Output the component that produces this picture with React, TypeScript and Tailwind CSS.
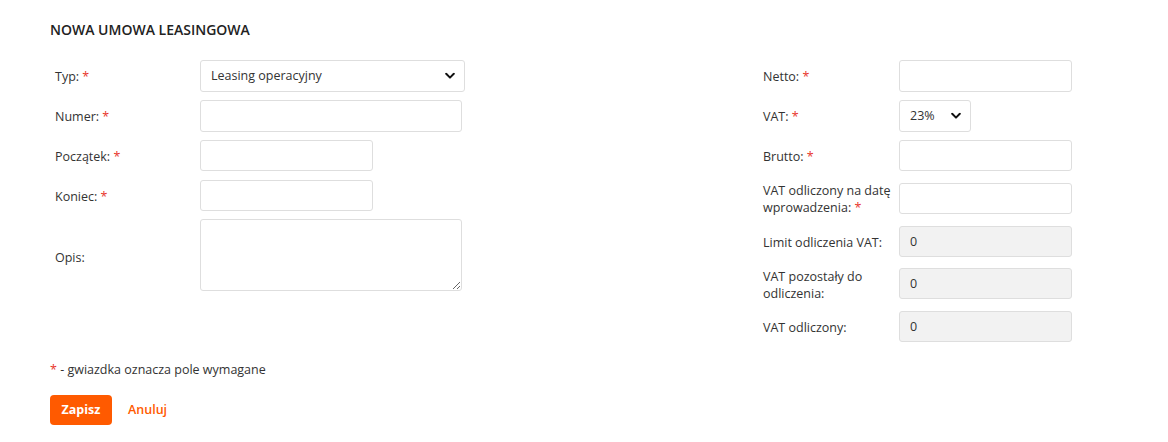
import type { ReactNode } from 'react'

const Req = () => <span className="text-[#e8352b]"> *</span>

function Chevron() {
  return (
    <svg
      className="pointer-events-none absolute right-[10px] top-1/2 -translate-y-1/2"
      width="10"
      height="7"
      viewBox="0 0 10 7"
      fill="none"
    >
      <path d="M1.2 1.3 5 5.1 8.8 1.3" stroke="#111" strokeWidth="2" strokeLinecap="round" strokeLinejoin="round" />
    </svg>
  )
}

const inputCls =
  'h-[31px] rounded-[3px] border border-[#dedede] bg-white px-[10px] text-[12.5px] text-[#333] outline-none'
const readonlyCls =
  'h-[31px] w-[173px] rounded-[3px] border border-[#dedede] bg-[#f2f2f2] px-[10px] text-[12.5px] text-[#333] outline-none'

function Row({
  label,
  children,
  className = 'h-[32px]',
  labelClass = '',
}: {
  label: ReactNode
  children: ReactNode
  className?: string
  labelClass?: string
}) {
  return (
    <div className={`flex ${className}`}>
      <div className={`flex w-[150px] shrink-0 items-center pl-[5px] leading-[17px] ${labelClass}`}>
        <span>{label}</span>
      </div>
      <div>{children}</div>
    </div>
  )
}

function RRow({ label, children, className = 'h-[32px]' }: { label: ReactNode; children: ReactNode; className?: string }) {
  return (
    <div className={`flex ${className}`}>
      <div className="flex w-[136px] shrink-0 items-center pr-[6px] leading-[17px]">
        <span>{label}</span>
      </div>
      <div>{children}</div>
    </div>
  )
}

export default function App() {
  return (
    <div className="min-h-[442px] w-[1168px] bg-white pl-[50px] pt-[21px] font-['Open_Sans',sans-serif] text-[12.5px] text-[#333]">
      <h1 className="text-[14px] font-semibold leading-[18px] text-[#222]">NOWA UMOWA LEASINGOWA</h1>

      <div className="mt-[21px] flex">
        <div className="flex w-[713px] flex-col gap-[8px]">
          <Row label={<>Typ:<Req /></>}>
            <div className="relative">
              <select
                defaultValue="op"
                className={`${inputCls} h-[32px] w-[265px] appearance-none`}
              >
                <option value="op">Leasing operacyjny</option>
                <option value="fin">Leasing finansowy</option>
              </select>
              <Chevron />
            </div>
          </Row>
          <Row label={<>Numer:<Req /></>}>
            <input className={`${inputCls} h-[32px] w-[262px]`} />
          </Row>
          <Row label={<>Początek:<Req /></>}>
            <input className={`${inputCls} w-[173px]`} />
          </Row>
          <Row label={<>Koniec:<Req /></>}>
            <input className={`${inputCls} w-[173px]`} />
          </Row>
          <Row className="-mt-[1px] h-[72px]" labelClass="pt-[4px]" label="Opis:">
            <textarea className={`${inputCls} block h-[72px] w-[262px] py-[6px]`} />
          </Row>
        </div>

        <div className="flex w-[308px] flex-col gap-[8px]">
          <RRow label={<>Netto:<Req /></>}>
            <input className={`${inputCls} h-[32px] w-[173px]`} />
          </RRow>
          <RRow label={<>VAT:<Req /></>}>
            <div className="relative">
              <select defaultValue="23" className={`${inputCls} h-[32px] w-[72px] appearance-none`}>
                <option value="23">23%</option>
                <option value="8">8%</option>
                <option value="5">5%</option>
                <option value="0">0%</option>
              </select>
              <Chevron />
            </div>
          </RRow>
          <RRow label={<>Brutto:<Req /></>}>
            <input className={`${inputCls} w-[173px]`} />
          </RRow>
          <RRow className="h-[38px]" label={<>VAT odliczony na datę wprowadzenia:<Req /></>}>
            <input className={`${inputCls} mt-[3px] w-[173px]`} />
          </RRow>
          <RRow label="Limit odliczenia VAT:">
            <input readOnly value="0" className={readonlyCls} />
          </RRow>
          <RRow className="h-[37px]" label="VAT pozostały do odliczenia:">
            <input readOnly value="0" className={`${readonlyCls} mt-[2px]`} />
          </RRow>
          <RRow label="VAT odliczony:">
            <input readOnly value="0" className={readonlyCls} />
          </RRow>
        </div>
      </div>

      <p className="mt-[18px] leading-[17px]">
        <span className="text-[#e8352b]">*</span> - gwiazdka oznacza pole wymagane
      </p>

      <div className="mt-[17px] flex items-center gap-[16px]">
        <button className="h-[30px] w-[62px] rounded-[4px] bg-[#ff5a00] text-[12.5px] font-bold text-white">
          Zapisz
        </button>
        <button className="text-[12.5px] font-semibold text-[#ff5a00]">Anuluj</button>
      </div>
    </div>
  )
}
